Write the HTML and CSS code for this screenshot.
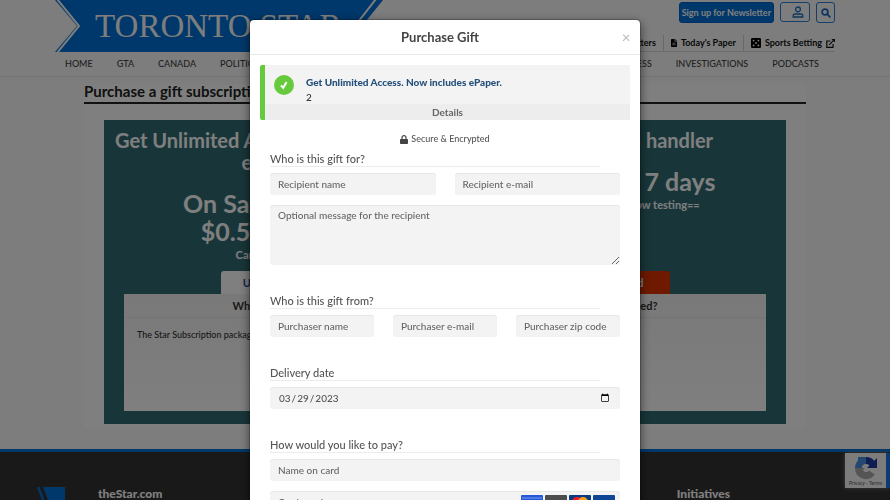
FILE: index.html
```html
<!DOCTYPE html>
<html lang="en">
  <head>
    <meta charset="UTF-8" />
    <meta name="viewport" content="width=device-width, initial-scale=1.0" />
    <title>Purchase a gift subscription | The Star</title>
    <link rel="stylesheet" href="styles.css" />
  </head>
  <body class="modal-open">
    <header class="site-header">
      <div class="header-inner">
        <div class="masthead">
          <a class="logo" href="#" aria-label="Toronto Star">
            <svg class="logo-ribbon" viewBox="0 0 328 52" preserveAspectRatio="none" aria-hidden="true">
              <path d="M0 0H328L307 26L328 52H0L22 26Z" fill="#0070d6" />
              <path d="M3 -1L25 26L3 53M322 -1L301 26L322 53" transform="translate(-1 0)" fill="none" stroke="#fafafa" stroke-width="2" />
            </svg>
            <span class="logo-text">TORONTO STAR</span>
          </a>
          <div class="header-tools">
            <div class="tool-buttons">
              <button class="btn-newsletter" type="button">Sign up for Newsletter</button>
              <button class="btn-icon btn-account" type="button" aria-label="Account">
                <svg viewBox="0 0 12 12" width="12" height="12" fill="none" stroke="currentColor" stroke-width="1.3">
                  <circle cx="6" cy="3.4" r="2.4" />
                  <path d="M1.2 11V9.9Q1.2 8 3.2 8H8.8Q10.8 8 10.8 9.9V11Z" />
                </svg>
              </button>
              <button class="btn-icon" type="button" aria-label="Search">
                <svg viewBox="0 0 10 10" width="10" height="10" fill="none" stroke="currentColor" stroke-width="1.8">
                  <circle cx="4" cy="4" r="2.9" />
                  <path d="M6.2 6.2L9.3 9.3" />
                </svg>
              </button>
            </div>
            <nav class="quick-links">
              <a href="#">Newsletters</a>
              <a href="#">
                <svg viewBox="0 0 6 8" width="6" height="8"><path d="M0 .8Q0 0 .8 0H3.6V2.4H6V7.2Q6 8 5.2 8H.8Q0 8 0 7.2ZM4.2 0L6 1.8H4.2Z" /><path d="M1.4 4.2H4.6M1.4 5.8H4.6" stroke="#fafafa" stroke-width=".7" /></svg>
                Today's Paper
              </a>
              <a href="#">
                <svg viewBox="0 0 10 10" width="10" height="10"><rect width="10" height="10" rx="1.2" /><g fill="#fafafa"><circle cx="2.6" cy="2.6" r=".9" /><circle cx="7.4" cy="2.6" r=".9" /><circle cx="5" cy="5" r=".9" /><circle cx="2.6" cy="7.4" r=".9" /><circle cx="7.4" cy="7.4" r=".9" /></g></svg>
                Sports Betting
                <svg viewBox="0 0 9 9" width="9" height="9" fill="none" stroke="currentColor" stroke-width="1.2"><path d="M4.4 2H.8V8.3H7V5M3.2 5.8L7.6 1.4" /><path d="M5.4 0H9V3.6Z" fill="currentColor" stroke="none" /></svg>
              </a>
            </nav>
          </div>
        </div>
        <nav class="main-nav">
          <div class="nav-group">
            <a href="#">HOME</a>
            <a href="#">GTA</a>
            <a href="#">CANADA</a>
            <a href="#">POLITICS</a>
          </div>
          <div class="nav-group">
            <a href="#">BUSINESS</a>
            <a href="#">INVESTIGATIONS</a>
            <a href="#">PODCASTS</a>
          </div>
        </nav>
      </div>
    </header>

    <main class="page">
      <h1 class="page-title">Purchase a gift subscription</h1>
      <div class="offers">
        <section class="offer">
          <h2>Get Unlimited Access. Now includes ePaper.</h2>
          <p class="offer-price">On Sale Now for<br />$0.50/month</p>
          <p class="offer-note">Cancel anytime.</p>
          <button class="offer-btn" type="button">Unlock Offer</button>
          <div class="offer-details">
            <h3>What's Included?</h3>
            <p>The Star Subscription package</p>
          </div>
        </section>
        <section class="offer">
          <h2>Testing with a handler</h2>
          <p class="offer-price">Try free for 7 days</p>
          <p class="offer-note">==Promotional text now testing==</p>
          <button class="offer-btn offer-btn-red" type="button">Get Started</button>
          <div class="offer-details">
            <h3>What's Included?</h3>
          </div>
        </section>
      </div>
    </main>

    <footer class="site-footer">
      <svg class="footer-logo" viewBox="0 0 28 52" width="28" height="52" aria-hidden="true">
        <path d="M0 0H2.5L22 52H19ZM6 0H28V52H26Z" fill="#0070d6" />
      </svg>
      <h4>theStar.com</h4>
      <h4 class="footer-initiatives">Initiatives</h4>
    </footer>

    <div class="recaptcha">
      <div class="recaptcha-box">
        <svg viewBox="0 0 24 24" width="24" height="24" aria-hidden="true">
          <path d="M4.5 12A7.5 7.5 0 0 1 12 4.5" fill="none" stroke="#4a90e2" stroke-width="7" />
          <path d="M4 5V1H12V5Z" fill="#4a90e2" />
          <path d="M12 4.5A7.5 7.5 0 0 1 19.5 12" fill="none" stroke="#1c3aa9" stroke-width="7" />
          <path d="M23 2V12H13Z" fill="#1c3aa9" />
          <path d="M4.5 12A7.5 7.5 0 0 0 18 16.5" fill="none" stroke="#ababab" stroke-width="7" />
          <path d="M1 12H11L7 16Z" fill="#ababab" />
        </svg>
        <span class="recaptcha-terms"><a href="#">Privacy</a> - <a href="#">Terms</a></span>
      </div>
    </div>

    <div class="modal-backdrop">
      <div class="modal" role="dialog" aria-labelledby="giftTitle">
        <div class="modal-header">
          <h2 class="modal-title" id="giftTitle">Purchase Gift</h2>
          <button class="modal-close" type="button" aria-label="Close">&times;</button>
        </div>
        <form class="modal-body">
          <div class="plan">
            <div class="plan-main">
              <svg class="plan-check" viewBox="0 0 20 20" width="20" height="20" aria-hidden="true">
                <circle cx="10" cy="10" r="10" fill="#67c93c" />
                <path d="M7 10.4L9.2 12.8L12.6 7" fill="none" stroke="#fff" stroke-width="2" />
              </svg>
              <div>
                <strong class="plan-name">Get Unlimited Access. Now includes ePaper.</strong>
                <div class="plan-qty">2</div>
              </div>
            </div>
            <button class="plan-details" type="button">Details</button>
          </div>

          <p class="secure">
            <svg viewBox="0 0 8 9" width="8" height="9" aria-hidden="true">
              <path d="M0 4.6Q0 4 .8 4H7.2Q8 4 8 4.6V8.2Q8 9 7.2 9H.8Q0 9 0 8.2Z" fill="#444" />
              <path d="M2 4.2V2.6A2 2 0 0 1 6 2.6V4.2" fill="none" stroke="#444" stroke-width="1.2" />
            </svg>
            Secure &amp; Encrypted
          </p>

          <section class="form-section">
            <h3>Who is this gift for?</h3>
            <div class="form-row">
              <input type="text" placeholder="Recipient name" aria-label="Recipient name" />
              <input type="email" placeholder="Recipient e-mail" aria-label="Recipient e-mail" />
            </div>
            <textarea placeholder="Optional message for the recipient" aria-label="Optional message for the recipient"></textarea>
          </section>

          <section class="form-section">
            <h3>Who is this gift from?</h3>
            <div class="form-row">
              <input type="text" placeholder="Purchaser name" aria-label="Purchaser name" />
              <input type="email" placeholder="Purchaser e-mail" aria-label="Purchaser e-mail" />
              <input type="text" placeholder="Purchaser zip code" aria-label="Purchaser zip code" />
            </div>
          </section>

          <section class="form-section">
            <h3><label for="deliveryDate">Delivery date</label></h3>
            <input type="date" id="deliveryDate" value="2023-03-29" />
          </section>

          <section class="form-section">
            <h3>How would you like to pay?</h3>
            <input type="text" placeholder="Name on card" aria-label="Name on card" />
            <div class="card-field">
              <input type="text" placeholder="Card number" aria-label="Card number" />
              <div class="card-brands">
                <svg viewBox="0 0 22 14" width="22" height="14"><rect width="22" height="14" rx="1" fill="#2557d6" /><path d="M1 3H21" stroke="#7c9cf0" stroke-width="1" /></svg>
                <svg viewBox="0 0 22 14" width="22" height="14"><rect width="22" height="14" rx="1" fill="#4d4d4d" /></svg>
                <svg viewBox="0 0 22 14" width="22" height="14"><rect width="22" height="14" rx="1" fill="#0a3a82" /><circle cx="8" cy="7" r="5" fill="#eb1c26" /><circle cx="14" cy="7" r="5" fill="#f99f1b" /></svg>
                <svg viewBox="0 0 22 14" width="22" height="14"><rect width="22" height="14" rx="1" fill="#0e4595" /></svg>
              </div>
            </div>
          </section>
        </form>
      </div>
    </div>
  </body>
</html>
```
FILE: styles.css
```css
* {
  box-sizing: border-box;
}
body {
  display: flex;
  flex-direction: column;
  min-height: 100vh;
  margin: 0;
  font-family: Lato, "Open Sans", sans-serif;
  font-size: 10px;
  line-height: 14px;
  color: #333;
  background-color: #fafafa;
}
body.modal-open {
  height: 100vh;
  overflow: hidden;
}
h1,
h2,
h3,
h4,
p {
  margin: 0;
}
a {
  color: inherit;
  text-decoration: none;
}
button,
input,
textarea {
  font-family: inherit;
}
button {
  cursor: pointer;
}

/* Header */
.site-header {
  border-bottom: 1px solid #e4e4e4;
}
.header-inner {
  max-width: 780px;
  margin: 0 auto;
}
.masthead {
  display: flex;
  justify-content: space-between;
  height: 52px;
}
.logo {
  display: grid;
  width: 328px;
  align-items: center;
}
.logo-ribbon,
.logo-text {
  grid-area: 1 / 1;
}
.logo-ribbon {
  width: 100%;
  height: 52px;
}
.logo-text {
  padding-left: 40px;
  font-family: "Liberation Serif", serif;
  font-size: 33px;
  line-height: 52px;
  white-space: nowrap;
  color: #fafafa;
}
.header-tools {
  flex: 1;
  display: flex;
  flex-direction: column;
  justify-content: space-between;
  border-bottom: 1px solid #d8d8d8;
  padding-top: 2px;
}
.tool-buttons {
  display: flex;
  justify-content: flex-end;
  gap: 6px;
}
.btn-newsletter {
  height: 21px;
  padding: 0 2px;
  border: 1px solid #0062cc;
  border-radius: 3px;
  background-color: #0070d6;
  color: #fff;
  font-size: 9px;
  font-weight: bold;
}
.btn-icon {
  display: flex;
  align-items: center;
  justify-content: center;
  width: 19px;
  height: 21px;
  padding: 0;
  border: 1px solid #2b7cd0;
  border-radius: 3px;
  background: none;
  color: #1a6ec4;
}
.btn-account {
  width: 30px;
  height: 20px;
  padding-left: 6px;
}
.quick-links {
  display: flex;
  justify-content: flex-end;
  font-size: 9px;
  font-weight: bold;
  line-height: 16px;
  color: #111;
}
.quick-links a {
  display: flex;
  align-items: center;
  gap: 4px;
  padding: 0 7px;
  border-right: 1px solid #d0d0d0;
}
.quick-links a:last-child {
  padding-right: 0;
  border-right: 0;
}
.main-nav {
  display: flex;
  justify-content: space-between;
  padding: 0 16px 0 10px;
  font-size: 9px;
  font-weight: 500;
  line-height: 24px;
  color: #444;
}
.nav-group {
  display: flex;
  gap: 24px;
}

/* Offers */
.page {
  width: 100%;
  max-width: 722px;
  margin: 7px auto 0;
  padding-bottom: 4px;
  background-color: #fff;
}
.page-title {
  padding-bottom: 3px;
  border-bottom: 2px solid #222;
  font-size: 15px;
  font-weight: bold;
  line-height: 15px;
  color: #222;
}
.offers {
  display: flex;
  height: 304px;
  margin: 16px 20px 0;
  padding: 9px 0 13px;
  background-color: #306c72;
}
.offer {
  flex: 1;
  display: flex;
  flex-direction: column;
  align-items: center;
  padding: 0 20px;
  text-align: center;
  color: #fff;
}
.offer h2 {
  margin: 0 -12px;
  font-size: 20px;
  line-height: 22px;
}
.offer-price {
  margin-top: 16px;
  font-size: 25px;
  font-weight: bold;
  line-height: 28px;
}
.offer-note {
  margin-top: 3px;
  font-size: 11px;
  font-weight: bold;
}
.offer-btn {
  width: 108px;
  height: 23px;
  margin-top: auto;
  flex-shrink: 0;
  border: 0;
  border-radius: 3px 3px 0 0;
  background-color: #fff;
  color: #1c4fa0;
  font-size: 11px;
  font-weight: bold;
}
.offer-btn-red {
  background-color: #dc3300;
  color: #fff;
}
.offer-details {
  align-self: stretch;
  flex: 0 0 117px;
  background: linear-gradient(#f2f2f2, #fff);
  color: #333;
}
.offer-details h3 {
  font-size: 11px;
  line-height: 23px;
  border-bottom: 1px solid #e8e8e8;
}
.offer-details p {
  padding: 10px 13px;
  font-size: 9px;
  font-weight: 500;
  text-align: left;
}

/* Footer */
.site-footer {
  flex: 1 0 0;
  display: flex;
  min-height: 0;
  margin-top: 21px;
  padding: 35px 37px 0;
  border-top: 3px solid #0070d6;
  background-color: #333;
  color: #fff;
  overflow: hidden;
}
.site-footer h4 {
  margin-left: 33px;
  font-size: 12px;
  font-weight: 900;
  line-height: 14px;
}
.site-footer .footer-initiatives {
  margin-left: auto;
  margin-right: 123px;
}

/* reCAPTCHA badge */
.recaptcha {
  position: fixed;
  right: 0;
  bottom: 12px;
  padding-right: 4px;
  border-radius: 2px;
  background-color: #1a73e8;
  box-shadow: 0 0 4px #808080;
}
.recaptcha-box {
  display: flex;
  flex-direction: column;
  align-items: center;
  width: 41px;
  height: 35px;
  padding-top: 3px;
  background-color: #f9f9f9;
}
.recaptcha-terms {
  font-size: 5px;
  line-height: 7px;
  color: #555;
}

/* Modal */
.modal-backdrop {
  position: fixed;
  inset: 0;
  z-index: 10;
  display: flex;
  align-items: flex-start;
  justify-content: center;
  padding-top: 19px;
  overflow: hidden;
  background-color: rgba(0, 0, 0, 0.5);
}
.modal {
  width: 100%;
  max-width: 392px;
  border: 1px solid rgba(0, 0, 0, 0.2);
  border-radius: 5px;
  background-color: #fff;
  background-clip: padding-box;
  box-shadow: 0 3px 10px rgba(0, 0, 0, 0.5);
  color: #555;
}
.modal-header {
  display: grid;
  grid-template-columns: 10px 1fr 20px;
  align-items: center;
  height: 35px;
  padding: 0 4px;
  border-bottom: 1px solid #e9e9e9;
}
.modal-title {
  grid-column: 2;
  text-align: center;
  font-size: 13px;
  font-weight: bold;
  line-height: 16px;
  color: #444;
}
.modal-close {
  padding: 0;
  border: 0;
  background: none;
  font-size: 15px;
  line-height: 16px;
  color: #bbb;
}
.modal-body {
  padding: 10px 20px 24px;
}
.plan {
  margin: 0 -10px;
  border-left: 5px solid #67c93c;
  border-radius: 2px;
  background-color: #f3f3f3;
}
.plan-main {
  display: flex;
  gap: 12px;
  padding: 10px 9px 0;
}
.plan-name {
  display: block;
  font-size: 10px;
  font-weight: 900;
  line-height: 15px;
  color: #25507a;
}
.plan-qty {
  font-size: 10px;
  font-weight: 500;
  line-height: 14px;
  color: #333;
}
.plan-details {
  display: block;
  width: 100%;
  height: 16px;
  padding: 0;
  border: 0;
  background-color: #ededed;
  color: #666;
  font-size: 10px;
  font-weight: bold;
  line-height: 16px;
}
.secure {
  display: flex;
  align-items: center;
  justify-content: center;
  gap: 3px;
  margin: 12px 0 6px;
  font-size: 9px;
  font-weight: 500;
}
.form-section {
  margin-bottom: 29px;
}
.form-section h3 {
  margin: 0 20px 6px 0;
  border-bottom: 1px solid #ececec;
  font-size: 11px;
  font-weight: 500;
  line-height: 14px;
}
.form-row {
  display: flex;
  gap: 19px;
}
.form-section input,
.form-section textarea {
  display: block;
  width: 100%;
  min-width: 0;
  height: 22px;
  padding: 0 8px;
  border: 0;
  border-radius: 3px;
  background-color: #f3f3f3;
  box-shadow: inset 0 1px 1px #e6e6e6;
  color: #555;
  font-size: 10px;
  font-weight: 500;
}
.form-section textarea {
  height: 60px;
  margin-top: 10px;
  padding-top: 3px;
  line-height: 14px;
}
.form-section ::placeholder {
  color: #666;
}
.card-field {
  position: relative;
  margin-top: 10px;
}
.card-brands {
  position: absolute;
  top: 4px;
  right: 5px;
  display: flex;
  gap: 2px;
}
```
